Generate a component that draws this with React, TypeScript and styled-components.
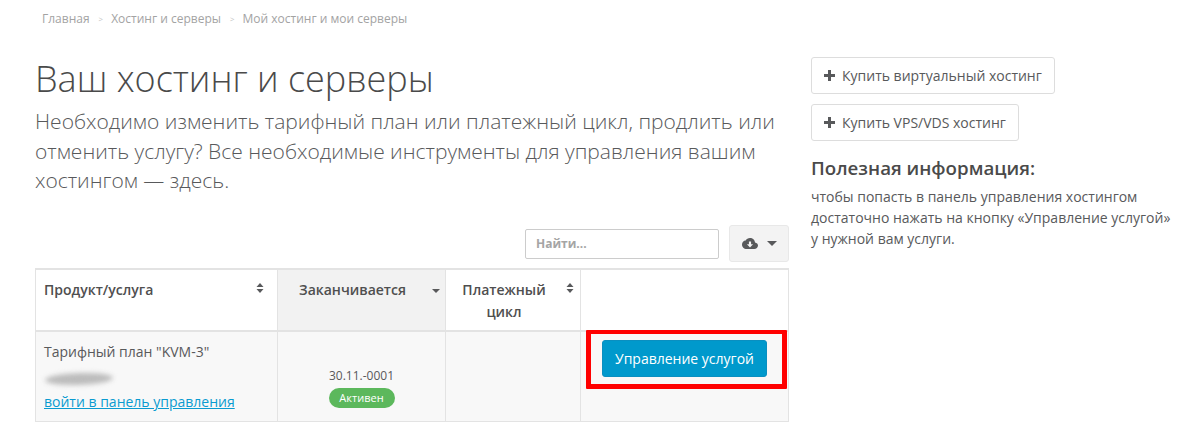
import React from "react";
import styled, { createGlobalStyle } from "styled-components";

const Global = createGlobalStyle`
  html, body { margin: 0; padding: 0; background: #fff; overflow: hidden; }
  body { font-family: "Open Sans", "Liberation Sans", sans-serif; color: #58595b; }
  * { box-sizing: border-box; }
`;

const Page = styled.div`
  width: 1188px;
  height: 423px;
  overflow: hidden;
  padding: 0 17px 0 35px;
  display: grid;
  grid-template-columns: 754px 326px;
  column-gap: 22px;
`;
const Main = styled.main`display: flex; flex-direction: column;`;
const Crumbs = styled.nav`
  display: flex;
  align-items: center;
  height: 20px;
  margin-top: 8px;
  padding-left: 7px;
  font-size: 12px;
  color: #a3a3a3;
`;
const CrumbSep = styled.span`
  font-size: 8px;
  color: #c4c4c4;
  margin: 1px 8px 0 9px;
`;
const Title = styled.h1`
  margin: 27px 0 0;
  font-size: 36px;
  line-height: 48px;
  font-weight: 300;
  color: #4a4a4a;
`;
const Lead = styled.p`
  margin: 4px 0 0;
  font-size: 21px;
  line-height: 29.5px;
  font-weight: 300;
  color: #58595b;
  width: 750px;
`;
const Tools = styled.div`
  display: flex;
  justify-content: flex-end;
  align-items: flex-start;
  margin-top: 29.5px;
  height: 43px;
`;
const Search = styled.div`
  width: 194px;
  height: 30px;
  margin-top: 4px;
  border: 1px solid #ccc;
  border-radius: 2px;
  padding-left: 10px;
  font-size: 12px;
  font-weight: 700;
  line-height: 28px;
  color: #a5a5a5;
`;
const Export = styled.div`
  width: 60px;
  height: 37px;
  margin-left: 10px;
  background: #f3f3f3;
  border: 1px solid #e8e8e8;
  border-radius: 3px;
  display: flex;
  align-items: center;
  justify-content: center;
  gap: 9px;
  color: #58595b;
`;
const Caret = styled.span`
  width: 0;
  height: 0;
  border-left: 5px solid transparent;
  border-right: 5px solid transparent;
  border-top: 5px solid #58595b;
`;
const Table = styled.div`
  display: grid;
  grid-template-columns: 242px 168px 135px 208px;
  border-top: 2px solid #e3e3e3;
  border-left: 1px solid #e3e3e3;
`;
const Head = styled.div<{ $sorted?: boolean; $center?: boolean }>`
  position: relative;
  height: 62px;
  padding: ${(p) => (p.$center ? "9px 26px 9px 8px" : "9px 8px")};
  font-size: 14px;
  line-height: 22px;
  font-weight: 600;
  color: #4f4f4f;
  background: ${(p) => (p.$sorted ? "#f2f2f2" : "#fff")};
  text-align: ${(p) => (p.$center ? "center" : "left")};
  border-right: 1px solid #e3e3e3;
  border-bottom: 2px solid #e3e3e3;
`;
const SortIcon = styled.svg<{ $right: number }>`
  position: absolute;
  top: 13px;
  right: ${(p) => p.$right}px;
  width: 8px;
  height: 10px;
  fill: #58595b;
`;
const Cell = styled.div<{ $center?: boolean }>`
  position: relative;
  height: 90px;
  background: #f8f8f8;
  border-right: 1px solid #e3e3e3;
  border-bottom: 1px solid #e3e3e3;
  font-size: 12px;
  color: #58595b;
  display: flex;
  flex-direction: column;
  ${(p) => (p.$center ? "align-items: center;" : "")}
`;
const ProductCell = styled(Cell)`padding: 10px 8px 0;`;
const ProductName = styled.div`font-size: 14px; line-height: 20px;`;
const Smudge = styled.div`
  width: 68px;
  height: 12px;
  margin: 11px 0 7px 1px;
  background: #bcbcbc;
  border-radius: 50%;
  filter: blur(2.5px);
  transform: rotate(-2deg);
`;
const PanelLink = styled.a`
  font-size: 14px;
  line-height: 20px;
  color: #0a9bd0;
  text-decoration: underline;
`;
const DateCell = styled(Cell)`padding-top: 34px;`;
const DateText = styled.div`line-height: 20px;`;
const Badge = styled.span`
  margin-top: 2px;
  width: 66px;
  height: 20px;
  border-radius: 10px;
  background: #5cb85c;
  color: #fff;
  font-size: 11px;
  font-weight: 500;
  line-height: 20px;
  text-align: center;
`;
const ActionCell = styled(Cell)`align-items: flex-start; padding: 8px 0 0 21px;`;
const ManageButton = styled.a`
  width: 165px;
  height: 37px;
  background: #0099cc;
  border: 1px solid #0a8fc0;
  border-radius: 3px;
  color: #fff;
  font-size: 14px;
  line-height: 35px;
  text-align: center;
`;
const Highlight = styled.div`
  position: absolute;
  left: 5px;
  top: -2px;
  width: 201px;
  height: 59px;
  border: 5px solid #ff0000;
  border-top-width: 4px;
  border-radius: 1px;
  pointer-events: none;
`;
const Side = styled.aside`
  display: flex;
  flex-direction: column;
  align-items: flex-start;
  padding-top: 57px;
`;
const BuyButton = styled.a`
  display: flex;
  align-items: center;
  gap: 7px;
  height: 37px;
  padding: 0 12px;
  margin-bottom: 10px;
  border: 1px solid #ddd;
  border-radius: 3px;
  font-size: 14px;
  color: #58595b;
`;
const SideTitle = styled.h3`
  margin: 2px 0 0;
  font-size: 18.7px;
  line-height: 30px;
  font-weight: 600;
  color: #4a4a4a;
`;
const SideText = styled.p`
  margin: 3px 0 0;
  font-size: 14px;
  line-height: 21px;
  color: #58595b;
  white-space: nowrap;
`;

const Plus = () => (
  <svg width="11" height="11" viewBox="0 0 11 11" fill="#58595b">
    <path d="M4 0h3v4h4v3H7v4H4V7H0V4h4z" />
  </svg>
);
const Sort = ({ right }: { right: number }) => (
  <SortIcon $right={right} viewBox="0 0 8 10"><path d="M4 0l3.5 4H.5zM4 10L.5 6h7z" /></SortIcon>
);
const SortDown = styled.span`
  position: absolute;
  top: 19px;
  right: 5px;
  width: 0;
  height: 0;
  border-left: 4px solid transparent;
  border-right: 4px solid transparent;
  border-top: 4px solid #58595b;
`;

export default function App() {
  return (
    <Page>
      <Global />
      <Main>
        <Crumbs>
          Главная<CrumbSep>&gt;</CrumbSep>Хостинг и серверы<CrumbSep>&gt;</CrumbSep>Мой хостинг и мои серверы
        </Crumbs>
        <Title>Ваш хостинг и серверы</Title>
        <Lead>
          Необходимо изменить тарифный план или платежный цикл, продлить или отменить услугу? Все необходимые инструменты для управления вашим хостингом — здесь.
        </Lead>
        <Tools>
          <Search>Найти...</Search>
          <Export>
            <svg width="16" height="11" viewBox="0 0 15 11" preserveAspectRatio="none" fill="#58595b">
              <path d="M12.2 4.6C12.1 2 10 0 7.5 0 5.7 0 4.1 1 3.4 2.6 1.5 2.7 0 4.4 0 6.4 0 8.9 1.9 11 4.3 11h7.2c1.9 0 3.5-1.6 3.5-3.5 0-1.3-1.1-2.5-2.8-2.9zM7.5 9.4 4.6 6.2h1.9V3.4h2v2.8h1.9z" />
            </svg>
            <Caret />
          </Export>
        </Tools>
        <Table>
          <Head>Продукт/услуга<Sort right={13} /></Head>
          <Head $sorted $center>Заканчивается<SortDown /></Head>
          <Head $center>Платежный цикл<Sort right={6} /></Head>
          <Head />
          <ProductCell>
            <ProductName>Тарифный план "KVM-3"</ProductName>
            <Smudge />
            <PanelLink>войти в панель управления</PanelLink>
          </ProductCell>
          <DateCell $center>
            <DateText>30.11.-0001</DateText>
            <Badge>Активен</Badge>
          </DateCell>
          <Cell />
          <ActionCell>
            <ManageButton>Управление услугой</ManageButton>
            <Highlight />
          </ActionCell>
        </Table>
      </Main>
      <Side>
        <BuyButton><Plus />Купить виртуальный хостинг</BuyButton>
        <BuyButton><Plus />Купить VPS/VDS хостинг</BuyButton>
        <SideTitle>Полезная информация:</SideTitle>
        <SideText>
          чтобы попасть в панель управления хостингом<br />
          достаточно нажать на кнопку «Управление услугой»<br />
          у нужной вам услуги.
        </SideText>
      </Side>
    </Page>
  );
}
